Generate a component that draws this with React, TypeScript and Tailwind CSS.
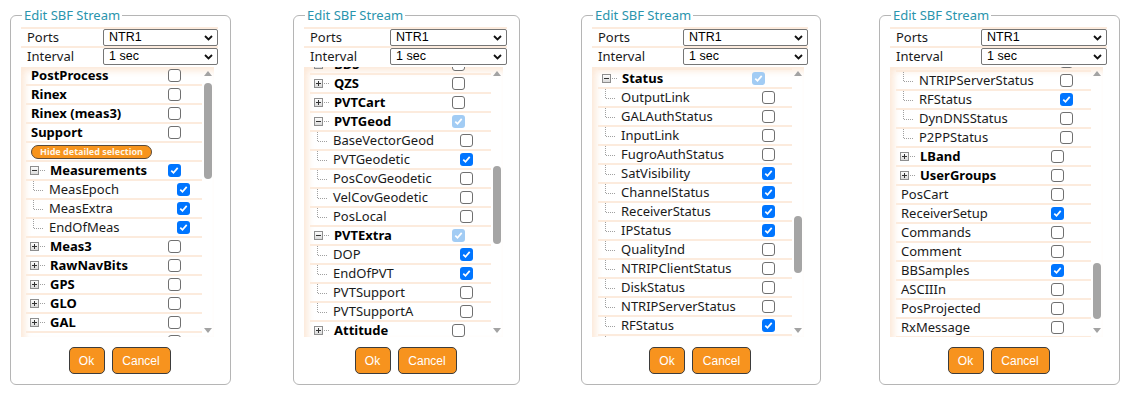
import React from 'react';

type CheckState = 'on' | 'off' | 'dim';

interface Row {
  label: string;
  kind: 'plain' | 'plus' | 'minus' | 'child' | 'button';
  bold?: boolean;
  check?: CheckState;
}

interface PanelCfg {
  width: string;
  ml: string;
  labelCol: string;
  cbW: string;
  childW: string;
  offset: string;
  listPl: string;
  thumb: string;
  rows: Row[];
}

const plain = (label: string, check: CheckState = 'off', bold = true): Row => ({ label, kind: 'plain', bold, check });
const plus = (label: string, check: CheckState = 'off'): Row => ({ label, kind: 'plus', bold: true, check });
const minus = (label: string, check: CheckState = 'off'): Row => ({ label, kind: 'minus', bold: true, check });
const child = (label: string, check: CheckState = 'off'): Row => ({ label, kind: 'child', check });

const panels: PanelCfg[] = [
  {
    width: 'w-[221px]',
    ml: 'ml-[10px]',
    labelCol: 'w-[82px]',
    cbW: 'w-[142px]',
    childW: 'w-[151px]',
    offset: 'mt-[0px]',
    listPl: 'pl-[5px]',
    thumb: 'top-[16px] h-[96px]',
    rows: [
      plain('PostProcess'),
      plain('Rinex'),
      plain('Rinex (meas3)'),
      plain('Support'),
      { label: 'Hide detailed selection', kind: 'button' },
      minus('Measurements', 'on'),
      child('MeasEpoch', 'on'),
      child('MeasExtra', 'on'),
      child('EndOfMeas', 'on'),
      plus('Meas3'),
      plus('RawNavBits'),
      plus('GPS'),
      plus('GLO'),
      plus('GAL'),
      plus('GEO'),
    ],
  },
  {
    width: 'w-[227px]',
    ml: 'ml-[62px]',
    labelCol: 'w-[86px]',
    cbW: 'w-[142px]',
    childW: 'w-[150px]',
    offset: 'mt-[-11px]',
    listPl: 'pl-[6px]',
    thumb: 'top-[99px] h-[78px]',
    rows: [
      plus('BDS'),
      plus('QZS'),
      plus('PVTCart'),
      minus('PVTGeod', 'dim'),
      child('BaseVectorGeod'),
      child('PVTGeodetic', 'on'),
      child('PosCovGeodetic'),
      child('VelCovGeodetic'),
      child('PosLocal'),
      minus('PVTExtra', 'dim'),
      child('DOP', 'on'),
      child('EndOfPVT', 'on'),
      child('PVTSupport'),
      child('PVTSupportA'),
      plus('Attitude'),
    ],
  },
  {
    width: 'w-[240px]',
    ml: 'ml-[61px]',
    labelCol: 'w-[91px]',
    cbW: 'w-[154px]',
    childW: 'w-[164px]',
    offset: 'mt-[-16px]',
    listPl: 'pl-[6px]',
    thumb: 'top-[149px] h-[57px]',
    rows: [
      plus('Attitude'),
      minus('Status', 'dim'),
      child('OutputLink'),
      child('GALAuthStatus'),
      child('InputLink'),
      child('FugroAuthStatus'),
      child('SatVisibility', 'on'),
      child('ChannelStatus', 'on'),
      child('ReceiverStatus', 'on'),
      child('IPStatus', 'on'),
      child('QualityInd'),
      child('NTRIPClientStatus'),
      child('DiskStatus'),
      child('NTRIPServerStatus'),
      child('RFStatus', 'on'),
      child('DynDNSStatus'),
    ],
  },
  {
    width: 'w-[241px]',
    ml: 'ml-[58px]',
    labelCol: 'w-[91px]',
    cbW: 'w-[155px]',
    childW: 'w-[164px]',
    offset: 'mt-[-14px]',
    listPl: 'pl-[6px]',
    thumb: 'top-[196px] h-[56px]',
    rows: [
      child('DiskStatus'),
      child('NTRIPServerStatus'),
      child('RFStatus', 'on'),
      child('DynDNSStatus'),
      child('P2PPStatus'),
      plus('LBand'),
      plus('UserGroups'),
      plain('PosCart', 'off', false),
      plain('ReceiverSetup', 'on', false),
      plain('Commands', 'off', false),
      plain('Comment', 'off', false),
      plain('BBSamples', 'on', false),
      plain('ASCIIIn', 'off', false),
      plain('PosProjected', 'off', false),
      plain('RxMessage', 'off', false),
    ],
  },
];

function Check({ state }: { state: CheckState }) {
  if (state === 'off') {
    return <span className="block w-[13px] h-[13px] shrink-0 rounded-[3px] border border-[#707070] bg-white" />;
  }
  return (
    <span
      className={`flex w-[13px] h-[13px] shrink-0 items-center justify-center rounded-[3px] ${
        state === 'on' ? 'bg-[#0075ff]' : 'bg-[#a2ccf4]'
      }`}
    >
      <svg width="9" height="9" viewBox="0 0 9 9">
        <path d="M1.3 4.6 L3.5 6.8 L7.7 1.9" stroke="white" strokeWidth="1.7" fill="none" />
      </svg>
    </span>
  );
}

function Expander({ open }: { open: boolean }) {
  return (
    <svg width="20" height="9" viewBox="0 0 20 9" className="shrink-0">
      <defs>
        <linearGradient id="exg" x1="0" y1="0" x2="0" y2="1">
          <stop offset="0" stopColor="#ffffff" />
          <stop offset="1" stopColor="#d8d8d8" />
        </linearGradient>
      </defs>
      <rect x="0.5" y="0.5" width="8" height="8" fill="url(#exg)" stroke="#8e8e8e" />
      <line x1="2" y1="4.5" x2="7" y2="4.5" stroke="#333" />
      {!open && <line x1="4.5" y1="2" x2="4.5" y2="7" stroke="#333" />}
      <line x1="10" y1="4.5" x2="16" y2="4.5" stroke="#a0a0a0" strokeDasharray="1 1" />
    </svg>
  );
}

function Connector() {
  return (
    <svg width="20" height="17" viewBox="0 0 20 17" className="shrink-0">
      <line x1="7.5" y1="0" x2="7.5" y2="9" stroke="#a0a0a0" strokeDasharray="1 1" />
      <line x1="8" y1="9.5" x2="17" y2="9.5" stroke="#a0a0a0" strokeDasharray="1 1" />
    </svg>
  );
}

function ListRow({ row, cfg }: { row: Row; cfg: PanelCfg }) {
  if (row.kind === 'button') {
    return (
      <div className="flex items-center h-[19px] shrink-0 border-b-2 border-[#fcebdd]">
        <span className="ml-[5px] flex items-center justify-center w-[121px] h-[14px] rounded-full border border-[#5a4a3a] bg-[#f7941d] text-[9px] font-bold leading-none text-[#fff6e6]">
          {row.label}
        </span>
      </div>
    );
  }
  const isChild = row.kind === 'child';
  return (
    <div className="flex items-center h-[19px] shrink-0 border-b-2 border-[#fcebdd]">
      <div className={`${isChild ? cfg.childW : cfg.cbW} flex items-center h-full shrink-0 whitespace-nowrap`}>
        {row.kind === 'plain' && (
          <span className={`pl-[5px] ${row.bold ? 'font-bold text-black' : 'text-[#1a1a1a]'}`}>{row.label}</span>
        )}
        {(row.kind === 'plus' || row.kind === 'minus') && (
          <>
            <span className="ml-[4px] flex">
              <Expander open={row.kind === 'minus'} />
            </span>
            <span className="font-bold text-black">{row.label}</span>
          </>
        )}
        {isChild && (
          <>
            <Connector />
            <span className="ml-[3px] text-[#1a1a1a]">{row.label}</span>
          </>
        )}
      </div>
      <Check state={row.check || 'off'} />
    </div>
  );
}

function FakeSelect({ value }: { value: string }) {
  return (
    <div className="flex-1 flex items-center justify-between h-[17px] border border-[#767676] rounded-[2px] bg-white pl-[5px] pr-[4px] font-['Liberation_Sans',sans-serif] text-[12.5px] text-black">
      <span>{value}</span>
      <svg width="9" height="6" viewBox="0 0 9 6">
        <path d="M1 1 L4.5 4.5 L8 1" stroke="#111" strokeWidth="1.8" fill="none" />
      </svg>
    </div>
  );
}

function Panel({ cfg }: { cfg: PanelCfg }) {
  return (
    <fieldset className={`${cfg.width} ${cfg.ml} shrink-0 border border-[#b5b5b5] rounded-[6px] pl-[10px] pr-[12px] pb-[10px]`}>
      <legend className="ml-[1px] px-[2px] text-[13px] leading-[16px] text-[#2a94ad]">Edit SBF Stream</legend>
      <div className="mt-[4px]">
        <div className="flex items-center h-[19px] border-t-2 border-[#fcebdd]">
          <div className={`${cfg.labelCol} pl-[6px] shrink-0`}>Ports</div>
          <FakeSelect value="NTR1" />
        </div>
        <div className="flex items-center h-[19px] border-t-2 border-[#fcebdd]">
          <div className={`${cfg.labelCol} pl-[6px] shrink-0`}>Interval</div>
          <FakeSelect value="1 sec" />
        </div>
      </div>
      <div className="mt-[2px] mr-[4px] h-[270px] flex overflow-hidden shadow-[inset_4px_4px_6px_rgba(248,200,160,0.4)]">
        <div className={`flex-1 overflow-hidden ${cfg.listPl}`}>
          <div className={`flex flex-col ${cfg.offset}`}>
            {cfg.rows.map((r, i) => (
              <ListRow key={i} row={r} cfg={cfg} />
            ))}
          </div>
        </div>
        <div className="relative w-[12px] shrink-0">
          <svg className="absolute left-[2px] top-[4px]" width="8" height="5" viewBox="0 0 8 5">
            <path d="M0 5 L4 0 L8 5 Z" fill="#a3a3a3" />
          </svg>
          <div className={`absolute left-[2px] w-[8px] rounded-full bg-[#a5a5a5] ${cfg.thumb}`} />
          <svg className="absolute left-[2px] top-[261px]" width="8" height="5" viewBox="0 0 8 5">
            <path d="M0 0 L8 0 L4 5 Z" fill="#a3a3a3" />
          </svg>
        </div>
      </div>
      <div className="flex justify-center gap-[7px] mt-[10px] font-['Liberation_Sans',sans-serif] text-[12px] text-white">
        <button className="w-[36px] h-[27px] rounded-[5px] border-[1.5px] border-[#3c3c3c] bg-[#f7931e]">Ok</button>
        <button className="w-[59px] h-[27px] rounded-[5px] border-[1.5px] border-[#3c3c3c] bg-[#f7931e]">Cancel</button>
      </div>
    </fieldset>
  );
}

export default function App() {
  return (
    <div className="flex items-start w-[1133px] h-[402px] pt-[7px] bg-white font-['Noto_Sans',sans-serif] text-[13px] text-[#1a1a1a] overflow-hidden">
      {panels.map((p, i) => (
        <Panel key={i} cfg={p} />
      ))}
    </div>
  );
}
